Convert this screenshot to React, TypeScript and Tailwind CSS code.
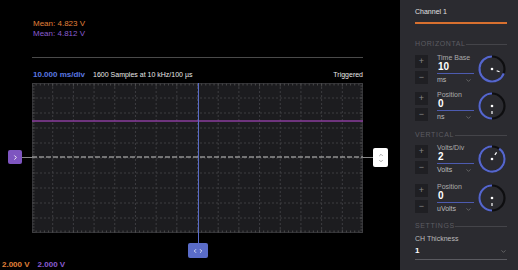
import React from "react";
import { ChevronDown, ChevronUp, ChevronLeft, ChevronRight } from "lucide-react";

const font = { fontFamily: '"Liberation Sans", Arial, sans-serif' };

function polar(cx: number, cy: number, r: number, deg: number) {
  const a = ((deg - 90) * Math.PI) / 180;
  return [cx + r * Math.cos(a), cy + r * Math.sin(a)];
}

function Knob({ tick }: { tick: number }) {
  const cx = 15, cy = 15, r = 12.5;
  const [sx, sy] = polar(cx, cy, r, tick);
  const [ex, ey] = polar(cx, cy, r, 359.9);
  const large = 360 - tick > 180 ? 1 : 0;
  const [t1x, t1y] = polar(cx, cy, 5, tick);
  const [t2x, t2y] = polar(cx, cy, 8, tick);
  return (
    <svg width="30" height="30" viewBox="0 0 30 30">
      <circle cx={cx} cy={cy} r={r} fill="none" stroke="#0e0e10" strokeWidth="2.2" />
      <path d={`M ${sx} ${sy} A ${r} ${r} 0 ${large} 1 ${ex} ${ey}`} fill="none" stroke="#5566cc" strokeWidth="2.2" />
      <circle cx={cx} cy={cy} r="1.3" fill="#fff" />
      <line x1={t1x} y1={t1y} x2={t2x} y2={t2y} stroke="#fff" strokeWidth="1.2" />
    </svg>
  );
}

function Control({ label, value, unit, tick, className }: { label: string; value: string; unit: string; tick: number; className?: string }) {
  return (
    <div className={"flex items-center " + (className || "")}>
      <div className="flex flex-col gap-[3px] w-[13px]">
        <div className="w-[13px] h-[13px] bg-[#1f1f23] text-[#888] text-[9px] leading-[13px] text-center">+</div>
        <div className="w-[13px] h-[13px] bg-[#1f1f23] text-[#888] text-[9px] leading-[13px] text-center">−</div>
      </div>
      <div className="ml-[9px] w-[38px] flex flex-col">
        <div className="text-[7px] leading-[8px] text-[#aaa]">{label}</div>
        <div className="text-[10px] leading-[10px] font-bold text-white pl-[1px]">{value}</div>
        <div className="h-px bg-[#4d5bb0] mt-[1px]" />
        <div className="flex items-center justify-between mt-[2px]">
          <span className="text-[7px] leading-[8px] text-[#bbb]">{unit}</span>
          <ChevronDown size={7} color="#888" strokeWidth={2} className="mr-[2px]" />
        </div>
      </div>
      <div className="ml-[3px]">
        <Knob tick={tick} />
      </div>
    </div>
  );
}

function Section({ title, lineW, className }: { title: string; lineW: string; className?: string }) {
  return (
    <div className={"flex items-center justify-between " + (className || "")}>
      <span className="text-[7px] leading-[10px] tracking-[0.6px] text-[#5c5c62]">{title}</span>
      <div className={"h-px bg-[#444449] " + lineW} />
    </div>
  );
}

function Plot() {
  const W = 331, H = 150;
  const cols = 16, rows = 10;
  const v: React.ReactNode[] = [];
  for (let i = 1; i < cols; i++) {
    const x = (i * W) / cols;
    v.push(<line key={"v" + i} x1={x} y1={0} x2={x} y2={H} stroke="#3d3d41" strokeWidth="1" strokeDasharray="2 2" />);
  }
  for (let j = 1; j < rows; j++) {
    const y = (j * H) / rows;
    v.push(<line key={"h" + j} x1={0} y1={y} x2={W} y2={y} stroke="#3d3d41" strokeWidth="1" strokeDasharray="2 2" />);
  }
  const ticks: React.ReactNode[] = [];
  for (let i = 0; i <= cols * 5; i++) {
    const x = (i * W) / (cols * 5);
    const l = i % 5 === 0 ? 3 : 2;
    ticks.push(<line key={"tt" + i} x1={x} y1={0.5} x2={x} y2={0.5 + l} stroke="#555" strokeWidth="0.8" />);
    ticks.push(<line key={"tb" + i} x1={x} y1={H - 0.5} x2={x} y2={H - 0.5 - l} stroke="#555" strokeWidth="0.8" />);
  }
  for (let j = 0; j <= rows * 5; j++) {
    const y = (j * H) / (rows * 5);
    const l = j % 5 === 0 ? 3 : 2;
    ticks.push(<line key={"tl" + j} x1={0.5} y1={y} x2={0.5 + l} y2={y} stroke="#555" strokeWidth="0.8" />);
    ticks.push(<line key={"tr" + j} x1={W - 0.5} y1={y} x2={W - 0.5 - l} y2={y} stroke="#555" strokeWidth="0.8" />);
  }
  return (
    <svg width={W} height={H} viewBox={`0 0 ${W} ${H}`} className="block">
      <rect x="0" y="0" width={W} height={H} fill="#1c1c1f" />
      {v}
      {ticks}
      <rect x="0.5" y="0.5" width={W - 1} height={H - 1} fill="none" stroke="#4a4a4e" strokeWidth="1" strokeDasharray="1 1" />
      <line x1="0" y1="38" x2={W} y2="38" stroke="#8a3d9e" strokeWidth="1.6" />
      <line x1="0" y1="74" x2={W} y2="74" stroke="#c8c8c8" strokeWidth="1.2" strokeDasharray="5 2" />
    </svg>
  );
}

export default function App() {
  return (
    <div className="w-[518px] h-[270px] flex bg-black overflow-hidden" style={font}>
      <div className="relative w-[400px] h-full flex flex-col">
        <div className="pl-[33px] pt-[19px] flex flex-col">
          <div className="text-[8px] leading-[10px] text-[#e0803a]">Mean: 4.823 V</div>
          <div className="text-[8px] leading-[10px] text-[#8a5cd0]">Mean: 4.812 V</div>
        </div>
        <div className="ml-[32px] mr-[37px] mt-[18px] h-px bg-[#4a4a4a]" />
        <div className="ml-[33px] mr-[37px] mt-[12px] flex items-center text-[7px] leading-[10px]">
          <span className="text-[#5b78e0] font-bold text-[8px]">10.000 ms/div</span>
          <span className="text-[#e8e8e8] ml-[8px]">1600 Samples at 10 kHz/100 µs</span>
          <span className="text-[#e8e8e8] ml-auto">Triggered</span>
        </div>
        <div className="ml-[32px] mt-[3px]">
          <Plot />
        </div>
        <div className="flex-1" />
        <div className="pl-[2px] flex items-center gap-[8px] text-[8px] leading-[10px] font-bold">
          <span className="text-[#e0803a]">2.000 V</span>
          <span className="text-[#8a5cd0]">2.000 V</span>
        </div>

        {/* overlays */}
        <div className="absolute left-[22px] top-[157px] w-[10px] h-px bg-[#888]" />
        <div className="absolute left-[8px] top-[150px] w-[14px] h-[14px] rounded-[2px] bg-[#7e55c0] flex items-center justify-center">
          <ChevronRight size={7} color="#fff" strokeWidth={3} />
        </div>
        <div className="absolute left-[363px] top-[157px] w-[10px] h-px bg-[#888]" />
        <div className="absolute left-[373px] top-[148px] w-[15px] h-[19px] rounded-[2px] bg-white flex flex-col items-center justify-center">
          <ChevronUp size={6} color="#777" strokeWidth={2.5} />
          <ChevronDown size={6} color="#777" strokeWidth={2.5} />
        </div>
        <div className="absolute left-[198px] top-[83px] w-px h-[160px] bg-[#5a6cc8]" />
        <div className="absolute left-[188px] top-[243px] w-[20px] h-[15px] rounded-[2px] bg-[#5a6cc8] flex items-center justify-center">
          <ChevronLeft size={6} color="#fff" strokeWidth={3} />
          <ChevronRight size={6} color="#fff" strokeWidth={3} />
        </div>
      </div>

      <div className="w-[118px] h-full bg-[#2b2b30] pl-[15px] pr-[11px] flex flex-col">
        <div className="mt-[7px] text-[7px] leading-[10px] text-[#e0e0e0]">Channel 1</div>
        <div className="mt-[5px] h-[2px] bg-[#d8702f]" />
        <Section title="HORIZONTAL" lineW="w-[42px]" className="mt-[15px]" />
        <Control label="Time Base" value="10" unit="ms" tick={110} className="mt-[5px]" />
        <Control label="Position" value="0" unit="ns" tick={180} className="mt-[7px]" />
        <Section title="VERTICAL" lineW="w-[52px]" className="mt-[9px]" />
        <Control label="Volts/Div" value="2" unit="Volts" tick={35} className="mt-[4px]" />
        <Control label="Position" value="0" unit="uVolts" tick={180} className="mt-[9px]" />
        <Section title="SETTINGS" lineW="w-[52px]" className="mt-[8px]" />
        <div className="mt-[4px] text-[7px] leading-[8px] text-[#bbb]">CH Thickness</div>
        <div className="mt-[3px] flex items-center justify-between">
          <span className="text-[8px] leading-[10px] font-bold text-white">1</span>
          <ChevronDown size={7} color="#888" strokeWidth={2} />
        </div>
        <div className="mt-[3px] h-px bg-[#5a5a60]" />
      </div>
    </div>
  );
}
